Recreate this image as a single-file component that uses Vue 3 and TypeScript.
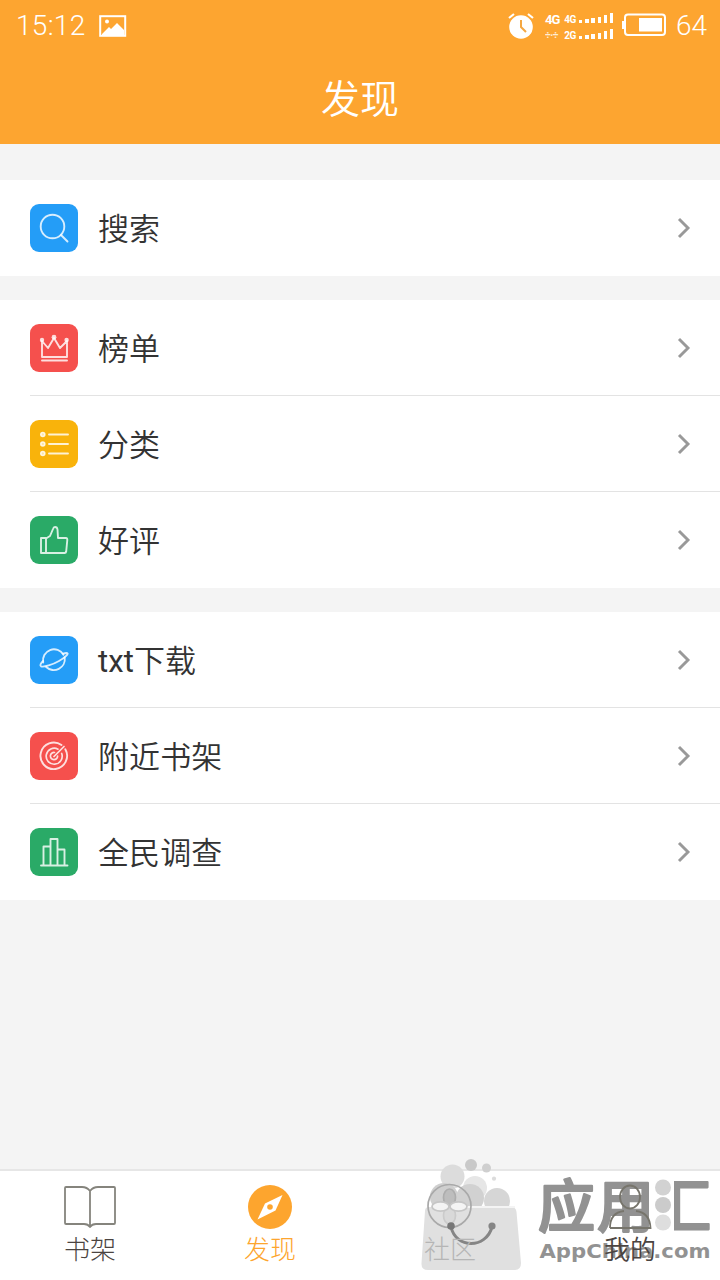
<script setup lang="ts">
interface Row { label: string; icon: string; color: string; prefix?: string }
const groups: Row[][] = [
  [{ label: '搜索', icon: 'search', color: 'blue' }],
  [
    { label: '榜单', icon: 'crown', color: 'red' },
    { label: '分类', icon: 'list', color: 'yellow' },
    { label: '好评', icon: 'thumb', color: 'green' },
  ],
  [
    { prefix: 'txt', label: '下载', icon: 'planet', color: 'blue' },
    { label: '附近书架', icon: 'radar', color: 'red' },
    { label: '全民调查', icon: 'chart', color: 'green' },
  ],
]
</script>

<template>
  <div class="screen">
    <header class="header">
      <div class="status">
        <span class="clock">15:12</span>
        <svg class="photo" width="28" height="22" viewBox="0 0 28 22">
          <rect x="1.2" y="1.2" width="25" height="19.6" fill="none" stroke="#fff" stroke-width="2" />
          <path d="M3 19L10 12L12 14L18 8L25 15V20H3Z" fill="#fff" />
          <circle cx="8" cy="6.5" r="2" fill="#fff" />
        </svg>
        <span class="grow"></span>
        <svg class="alarm" width="28" height="28" viewBox="0 0 28 28">
          <circle cx="14" cy="15" r="11.8" fill="#fff" />
          <path d="M2 6L7 2M21 2L26 6" stroke="#fff" stroke-width="2.2" />
          <path d="M14 8V15L19 20" fill="none" stroke="#f5a843" stroke-width="2" />
        </svg>
        <div class="networks">
          <div class="net"><b class="big">4G</b><b class="small">4G</b><i v-for="n in 6" :key="n" :class="'s' + n"></i></div>
          <div class="net"><b class="arrows">÷·÷</b><b class="small">2G</b><i v-for="n in 6" :key="n" :class="'s' + n"></i></div>
        </div>
        <svg class="battery" width="46" height="24" viewBox="0 0 46 24">
          <rect x="3" y="1.5" width="40" height="20.5" rx="3" fill="none" stroke="#fff" stroke-width="2" />
          <path d="M1 8V16" stroke="#fff" stroke-width="2" />
          <rect x="17" y="5" width="23" height="13.5" fill="#fff" />
        </svg>
        <span class="level">64</span>
      </div>
      <h1>发现</h1>
    </header>

    <main>
      <section v-for="(group, g) in groups" :key="g" class="group">
        <div v-for="row in group" :key="row.label" class="row">
          <span class="tile" :class="row.color">
            <svg width="48" height="48" viewBox="0 0 48 48" fill="none" stroke="#fff" stroke-opacity=".82" stroke-width="1.9" stroke-linejoin="round" stroke-linecap="round">
              <template v-if="row.icon === 'search'"><circle cx="22.5" cy="22.5" r="11.8" /><path d="M31 31L37.5 37.5" /></template>
              <template v-else-if="row.icon === 'crown'">
                <path d="M12 17V33H37V17L30 24L24 14L18 24Z" /><path d="M12 36.5H37" />
                <g fill="#fff" fill-opacity=".8" stroke="none"><circle cx="12" cy="16" r="2.2" /><circle cx="24" cy="13.2" r="2.4" /><circle cx="36.6" cy="16" r="2.2" /></g>
              </template>
              <template v-else-if="row.icon === 'list'">
                <path d="M19 14.5H38M19 24H38M19 33.5H38" />
                <g stroke-width="1.6" fill="#fff" fill-opacity=".65"><circle cx="12.8" cy="14.5" r="2" /><circle cx="12.8" cy="24" r="2" /><circle cx="12.8" cy="33.5" r="2" /></g>
              </template>
              <path v-else-if="row.icon === 'thumb'" d="M11 22H16V37H11ZM16 37H34.5Q36 37 36.2 35.5L37.3 24Q37.3 22 36 22H28L27.5 13.5Q27.2 11 25 11Q23.5 11 23 13L20 20L16 22.5" />
              <template v-else-if="row.icon === 'planet'">
                <path d="M13.2 26.5A11 11 0 0 1 33.5 18.8M34.7 21.5A11 11 0 0 1 16.2 31" />
                <path d="M13 25C10.5 27.5 9.8 29.5 11 30.3C13.5 31.5 23 28.5 29 25C35 21.5 38.5 18 37.5 17.3C36.8 16.7 35.5 16.9 33 17.6" />
              </template>
              <template v-else-if="row.icon === 'radar'">
                <path d="M31.5 13A13.3 13.3 0 1 0 35.3 17.2" />
                <path stroke-width="1.7" d="M28 17.2A8 8 0 1 0 31.7 21.5M24.5 20.5A3.6 3.6 0 1 0 27.6 24.2M24 24.5L34 14.5" />
              </template>
              <path v-else d="M11 37.5H37.5M13.5 37V18.5H20.5M20.5 37V11H27.5V37M27.5 21.5H34.5V37" />
            </svg>
          </span>
          <span class="label"><span v-if="row.prefix" class="latin">{{ row.prefix }}</span>{{ row.label }}</span>
          <svg class="chevron" width="16" height="24" viewBox="0 0 16 24"><path d="M3 3L12 12L3 21" fill="none" stroke="#999" stroke-width="2.9" /></svg>
        </div>
      </section>
    </main>

    <nav class="tabs">
      <div class="tab">
        <svg width="52" height="44" viewBox="0 0 52 44" fill="none" stroke="#85847d" stroke-width="1.8" stroke-linejoin="round">
          <path d="M26 6Q23 2 18 2H2Q1 2 1 3V38Q1 39 2 39H20Q24 39 26 42Q28 39 32 39H50Q51 39 51 38V3Q51 2 50 2H34Q29 2 26 6ZM26 6V42" />
        </svg>
        <span>书架</span>
      </div>
      <div class="tab active">
        <svg width="44" height="44" viewBox="0 0 44 44">
          <circle cx="22" cy="22" r="22" fill="#fda52e" />
          <path d="M34.5 10L27.5 25.5L9.5 34.5L17 18.5Z" fill="#fff" /><circle cx="22" cy="22" r="2.8" fill="#fda52e" />
        </svg>
        <span>发现</span>
      </div>
      <div class="watermark">
        <svg class="bag" width="104" height="116" viewBox="420 1156 104 116">
          <g fill="#dcdcdc">
            <circle cx="452.5" cy="1176.5" r="12" /><circle cx="475" cy="1188" r="12" fill="#e6e6e6" />
            <circle cx="444" cy="1197" r="14" fill="#cfcfcf" /><circle cx="470" cy="1198" r="14" fill="#d1d1d1" />
            <circle cx="497" cy="1201" r="13" fill="#d6d6d6" />
            <circle cx="471" cy="1165" r="6" fill="#c9c9c9" /><circle cx="486.5" cy="1168" r="4.5" fill="#cfcfcf" /><circle cx="494" cy="1178.7" r="2.1" />
          </g>
          <path d="M429 1207H511Q516 1207 516.5 1212L521 1263Q521 1270 515 1270H428Q421 1270 421.5 1263L425 1211Q425 1207 429 1207Z" fill="#e0e0e0" />
          <path d="M460 1207H515" stroke="#f4f4f4" stroke-width="1.8" />
          <g fill="none" stroke="#a9a9a9" stroke-width="1.7">
            <circle cx="449.5" cy="1206" r="21.5" />
            <ellipse cx="449.5" cy="1197.5" rx="6" ry="8.5" fill="#bdbdbd" stroke="#adadad" />
            <ellipse cx="449.5" cy="1215.5" rx="6" ry="8.5" fill="#d9d9d9" stroke="#cbcbcb" />
            <ellipse cx="440.5" cy="1206.5" rx="8.5" ry="4.6" fill="#f4f4f4" stroke="#c6c6c6" /><ellipse cx="458.5" cy="1206.5" rx="8.5" ry="4.6" fill="#f4f4f4" stroke="#c6c6c6" />
          </g>
          <path d="M451 1227C456 1249 486 1249 492 1227" fill="none" stroke="#858585" stroke-width="3" />
          <circle cx="451" cy="1226" r="3.8" fill="#777" /><circle cx="492" cy="1226" r="3.6" fill="#858585" />
        </svg>
        <svg class="brand" width="184" height="114" viewBox="536 1158 184 114">
          <clipPath id="basin"><rect x="674" y="1158" width="46" height="80" /></clipPath>
          <g class="wordmark">
            <text x="538" y="1226.5">应</text>
            <text x="597" y="1226.5">用</text>
            <text x="654" y="1226.5" clip-path="url(#basin)">汇</text>
          </g>
          <g fill="#d2d2d2"><circle cx="663" cy="1187.5" r="8" /><circle cx="663" cy="1205" r="8" fill="#cbcbcb" /><circle cx="663" cy="1222.5" r="8" fill="#dedede" /></g>
          <text class="site" x="539.5" y="1257.5" textLength="171" lengthAdjust="spacingAndGlyphs">AppChina.com</text>
        </svg>
        <svg class="person" width="46" height="48" viewBox="607 1183 46 48" fill="none" stroke="#77756c" stroke-width="1.8">
          <ellipse cx="630" cy="1197" rx="10" ry="11.5" />
          <path d="M610 1228C610 1218 615 1212 624 1211M636 1211C645 1212 650 1218 650.5 1228H610" />
        </svg>
        <span class="over community-label">社区</span>
        <span class="over mine-label">我的</span>
      </div>
    </nav>
  </div>
</template>

<style scoped>
.screen { width: 720px; height: 1280px; display: flex; flex-direction: column; overflow: hidden; background: #f4f4f4; color: #333; font-family: Roboto, "Noto Sans CJK SC", sans-serif; font-weight: 300; }
.header { height: 144px; flex: none; background: #fda530; color: #fff; }
.status { height: 52px; display: flex; align-items: center; padding: 0 12px 0 16px; font-size: 28px; }
.clock { width: 83px; letter-spacing: .3px; padding-bottom: 2px; }
.grow { flex: 1; }
.alarm { margin-right: 10px; }
.networks { width: 72px; display: flex; flex-direction: column; gap: 1px; margin-right: 5px; }
.net { display: flex; align-items: flex-end; height: 15px; gap: 2.8px; }
.net b { font-size: 10px; line-height: 13px; width: 12px; letter-spacing: -.5px; font-weight: 700; }
.net .big { font-size: 13px; width: 16.5px; letter-spacing: -1px; }
.net .arrows { font-size: 10px; width: 16.5px; opacity: .8; }
.net i { width: 3.4px; height: 4px; background: #fff; margin-bottom: 3px; flex: none; }
.net .s1 { height: 3px; } .net .s3 { height: 5px; } .net .s4 { height: 6px; } .net .s5 { height: 8px; } .net .s6 { height: 10px; }
.battery { margin-right: 8px; margin-top: -2px; }
.level { padding-bottom: 2px; width: 32px; }
h1 { margin: 0; height: 92px; line-height: 96px; text-align: center; font-size: 39px; font-weight: 350; }
main { padding-top: 36px; display: flex; flex-direction: column; gap: 24px; flex: none; }
.group { background: #fff; padding-left: 30px; }
.row { height: 96px; box-sizing: border-box; display: flex; align-items: center; padding-right: 28px; }
.row:not(:last-child) { box-shadow: inset 0 -1px #e3e3e3; }
.tile { width: 48px; height: 48px; border-radius: 9px; overflow: hidden; margin-right: 20px; flex: none; }
.tile svg { display: block; }
.blue { background: #249df7; } .red { background: #f5504d; } .yellow { background: #f9b30b; } .green { background: #2aaa67; }
.label { font-size: 31px; line-height: 48px; flex: 1; font-weight: 350; padding-top: 4px; letter-spacing: .1px; }
.latin { font-weight: 400; }
.tabs { height: 111px; box-sizing: border-box; margin-top: auto; flex: none; background: #fff; border-top: 2px solid #e6e6e6; display: flex; position: relative; }
.tab { width: 180px; display: flex; flex-direction: column; align-items: center; padding-top: 14px; font-size: 26px; line-height: 38px; color: #4b4441; }
.tab svg { flex: none; }
.tab span { margin-top: 2px; }
.active { color: #fda52e; }
.watermark { position: absolute; left: 420px; top: -15px; width: 300px; height: 124px; }
.bag { position: absolute; left: 0; top: 0; }
.brand { position: absolute; left: 116px; top: 2px; }
.wordmark text { font: 500 57px "Noto Sans CJK SC", sans-serif; fill: #929292; stroke: #929292; stroke-width: 2.2px; stroke-linejoin: round; }
.site { font: 700 20px "DejaVu Sans", sans-serif; fill: #929292; }
.person { position: absolute; left: 187px; top: 27px; }
.over { position: absolute; top: 75px; font-size: 26px; line-height: 38px; white-space: nowrap; }
.community-label { left: 4px; color: #b5b5b5; }
.mine-label { left: 184px; color: #4b4441; font-weight: 350; }
</style>
